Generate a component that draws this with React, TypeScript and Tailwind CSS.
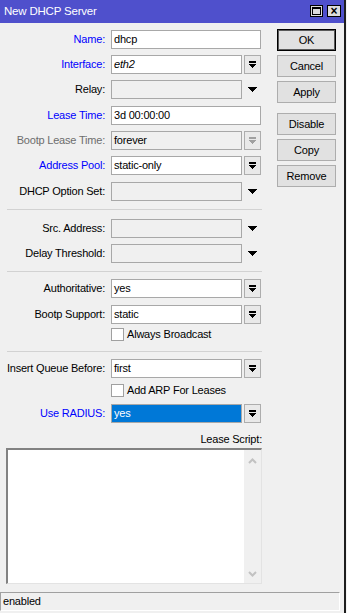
import React from 'react'

const font = "font-['Liberation_Sans',Arial,sans-serif] text-[11px] tracking-[-0.2px]"

function BarArrow({ grey }: { grey?: boolean }) {
  const c = grey ? '#a0a0a0' : '#000'
  return (
    <svg width="7" height="7" viewBox="0 0 7 7" shapeRendering="crispEdges">
      <rect x="0" y="0" width="7" height="2" fill={c} />
      <rect x="0" y="3" width="7" height="1" fill={c} />
      <rect x="1" y="4" width="5" height="1" fill={c} />
      <rect x="2" y="5" width="3" height="1" fill={c} />
      <rect x="3" y="6" width="1" height="1" fill={c} />
    </svg>
  )
}

function Tri() {
  return (
    <svg width="9" height="5" viewBox="0 0 9 5" shapeRendering="crispEdges">
      <rect x="0" y="0" width="9" height="1" fill="#000" />
      <rect x="1" y="1" width="7" height="1" fill="#000" />
      <rect x="2" y="2" width="5" height="1" fill="#000" />
      <rect x="3" y="3" width="3" height="1" fill="#000" />
      <rect x="4" y="4" width="1" height="1" fill="#000" />
    </svg>
  )
}

function Row({
  label,
  color = 'text-black',
  className = '',
  children,
}: {
  label: string
  color?: string
  className?: string
  children: React.ReactNode
}) {
  return (
    <div className={`flex h-[19px] items-center ${className}`}>
      <div className={`w-[105px] shrink-0 text-right ${color}`}>{label}</div>
      <div className="ml-[6px] flex h-full items-center">{children}</div>
    </div>
  )
}

function Field({
  value,
  wide,
  disabled,
  selected,
  italic,
}: {
  value?: string
  wide?: boolean
  disabled?: boolean
  selected?: boolean
  italic?: boolean
}) {
  const bg = selected ? 'bg-[#0078d7] text-white' : disabled ? 'bg-[#f0f0f0]' : 'bg-white'
  return (
    <div
      className={`h-[19px] ${wide ? 'w-[150px]' : 'w-[131px]'} border border-[#a8a8a8] ${bg} pl-[2px] leading-[17px] ${
        italic ? 'italic' : ''
      }`}
    >
      {value}
    </div>
  )
}

function Combo({ value, disabled, selected, italic }: { value?: string; disabled?: boolean; selected?: boolean; italic?: boolean }) {
  return (
    <>
      <Field value={value} disabled={disabled} selected={selected} italic={italic} />
      <div className="ml-[2px] flex h-[19px] w-[17px] items-center justify-center border border-[#adadad] bg-[#e9e9e9]">
        <BarArrow grey={disabled} />
      </div>
    </>
  )
}

function Drop() {
  return (
    <>
      <Field disabled />
      <div className="ml-[2px] flex h-[19px] w-[17px] items-center justify-center">
        <Tri />
      </div>
    </>
  )
}

function Check({ label, className = '' }: { label: string; className?: string }) {
  return (
    <div className={`flex h-[13px] items-center pl-[111px] ${className}`}>
      <div className="h-[13px] w-[13px] border border-[#a0a0a0] bg-white" />
      <span className="ml-[3px] leading-[13px]">{label}</span>
    </div>
  )
}

function Sep({ className = '' }: { className?: string }) {
  return <div className={`ml-[7px] h-px w-[255px] bg-[#d2d2d2] ${className}`} />
}

function Btn({ label, def, className = '' }: { label: string; def?: boolean; className?: string }) {
  return (
    <div
      className={`flex h-[22px] w-[59px] items-center justify-center ${
        def ? 'border border-black bg-[#e1e1e1] shadow-[inset_0_0_0_1px_#5a5a5a]' : 'border border-[#adadad] bg-[#e1e1e1]'
      } ${className}`}
    >
      {label}
    </div>
  )
}

function Chevron({ up }: { up?: boolean }) {
  return (
    <svg width="9" height="6" viewBox="0 0 9 6">
      <path d={up ? 'M1 5 L4.5 1.5 L8 5' : 'M1 1 L4.5 4.5 L8 1'} stroke="#c2c2c2" strokeWidth="2" fill="none" />
    </svg>
  )
}

export default function App() {
  const blue = 'text-[#0000ff]'
  return (
    <div className={`flex h-[613px] w-[347px] bg-[#f0f0f0] text-black ${font}`}>
      <div className="flex w-[344px] flex-col">
        <div className="flex h-[23px] shrink-0 items-center bg-[#4f50cc] pl-[4px] text-white">
          <span className="flex-1 pt-px text-[11.5px]">New DHCP Server</span>
          <div className="mr-[3px] flex items-center gap-[4px] pb-[2px]">
            <div className="flex h-[12px] w-[13px] items-center justify-center border border-black bg-[#dcdcdc]">
              <div className="h-[8px] w-[9px] border border-t-2 border-black" />
            </div>
            <div className="flex h-[12px] w-[14px] items-center justify-center border border-black bg-[#dcdcdc] text-[12px] leading-none font-bold text-black">
              ×
            </div>
          </div>
        </div>

        <div className="flex pt-[6px]">
          <div className="flex w-[262px] flex-col">
            <Row label="Name:" color={blue} className="mt-px">
              <Field value="dhcp" wide />
            </Row>
            <Row label="Interface:" color={blue} className="mt-[6px]">
              <Combo value="eth2" italic />
            </Row>
            <Row label="Relay:" className="mt-[6px]">
              <Drop />
            </Row>
            <Row label="Lease Time:" color={blue} className="mt-[7px]">
              <Field value="3d 00:00:00" wide />
            </Row>
            <Row label="Bootp Lease Time:" color="text-[#6d6d6d]" className="mt-[6px]">
              <Combo value="forever" disabled />
            </Row>
            <Row label="Address Pool:" color={blue} className="mt-[6px]">
              <Combo value="static-only" />
            </Row>
            <Row label="DHCP Option Set:" className="mt-[7px]">
              <Drop />
            </Row>
            <Sep className="mt-[8px]" />
            <Row label="Src. Address:" className="mt-[9px]">
              <Drop />
            </Row>
            <Row label="Delay Threshold:" className="mt-[6px]">
              <Drop />
            </Row>
            <Sep className="mt-[8px]" />
            <Row label="Authoritative:" className="mt-[7px]">
              <Combo value="yes" />
            </Row>
            <Row label="Bootp Support:" className="mt-[7px]">
              <Combo value="static" />
            </Row>
            <Check label="Always Broadcast" className="mt-[4px]" />
            <Sep className="mt-[10px]" />
            <Row label="Insert Queue Before:" className="mt-[7px]">
              <Combo value="first" />
            </Row>
            <Check label="Add ARP For Leases" className="mt-[6px]" />
            <Row label="Use RADIUS:" color={blue} className="mt-[7px]">
              <Combo value="yes" selected />
            </Row>
            <div className="mt-[9px] h-[14px] text-right leading-[14px]">Lease Script:</div>
            <div className="mt-[2px] ml-[6px] flex h-[136px] w-[256px] border-t-2 border-l-2 border-r border-b border-t-[#828282] border-l-[#828282] border-r-[#e3e3e3] border-b-[#e3e3e3] bg-white">
              <div className="flex-1" />
              <div className="flex w-[17px] flex-col items-center justify-between bg-[#f0f0f0] pt-[8px] pb-[6px]">
                <Chevron up />
                <Chevron />
              </div>
            </div>
          </div>

          <div className="ml-[15px] flex flex-col">
            <Btn label="OK" def />
            <Btn label="Cancel" className="mt-[4px]" />
            <Btn label="Apply" className="mt-[4px]" />
            <Btn label="Disable" className="mt-[10px]" />
            <Btn label="Copy" className="mt-[4px]" />
            <Btn label="Remove" className="mt-[4px]" />
          </div>
        </div>

        <div className="mt-[8px] h-[19px] w-[340px] border-t border-l border-b border-r border-t-[#a0a0a0] border-l-[#a0a0a0] border-b-white border-r-white pl-[2px] leading-[17px]">
          enabled
        </div>
      </div>
      <div className="w-[2px] bg-[#1e1e1e]" />
      <div className="w-px bg-[#f4f4f4]" />
    </div>
  )
}
